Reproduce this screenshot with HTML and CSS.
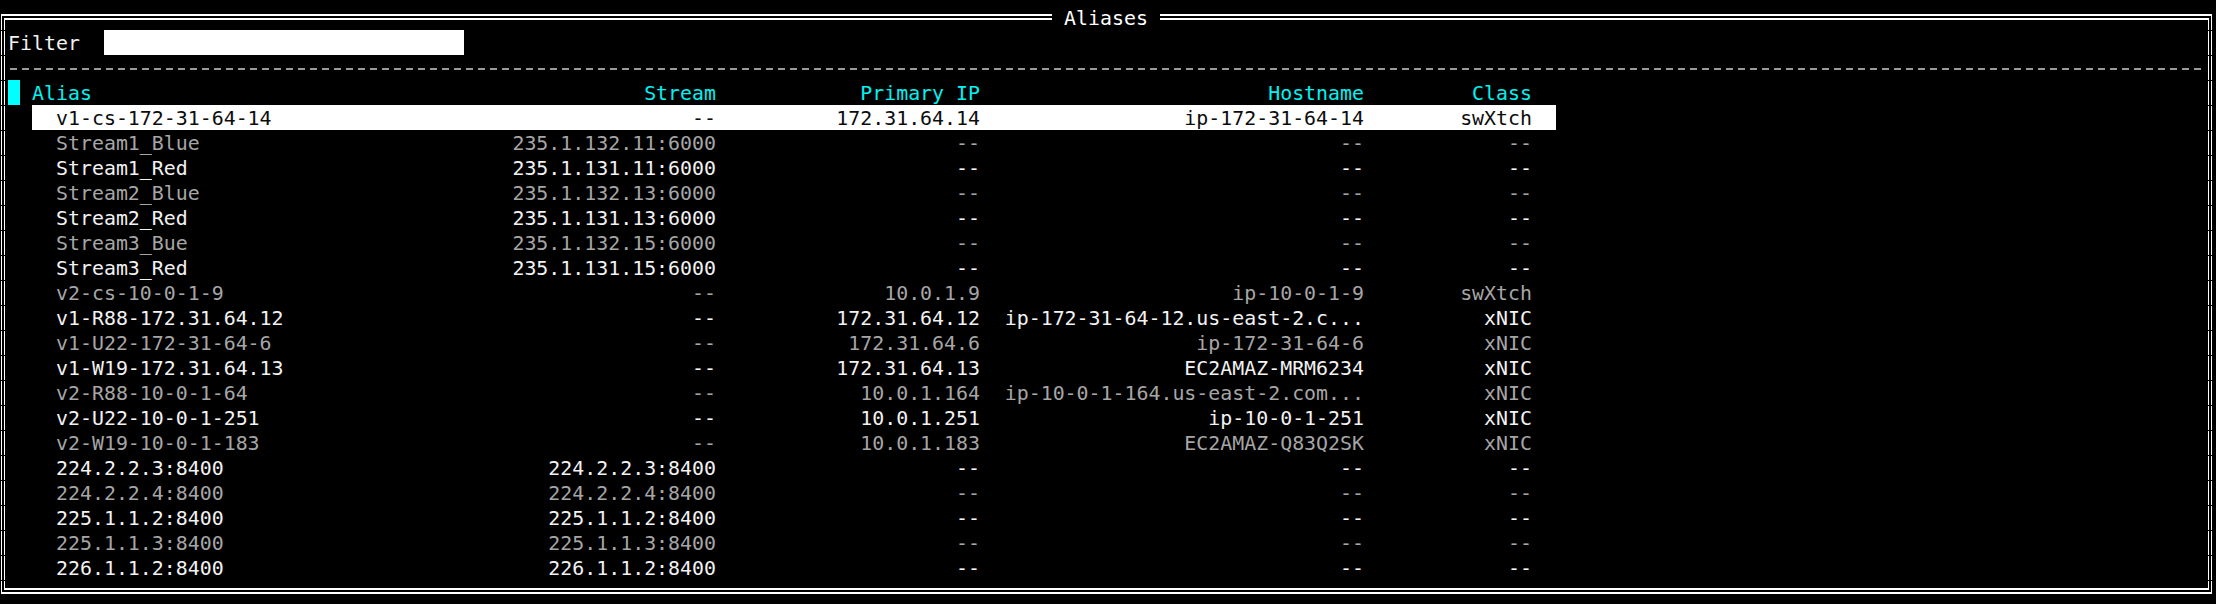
FILE: index.html
```html
<!DOCTYPE html>
<html lang="en">
<head>
<meta charset="utf-8">
<title>Aliases</title>
<link rel="stylesheet" href="styles.css">
</head>
<body>
<div class="frame">
  <div class="frame-inner">
    <div class="title">Aliases</div>

    <div class="filter-row">
      <span class="filter-label">Filter</span>
      <span class="filter-input"></span>
    </div>

    <div class="sep"><div class="dashes"></div></div>

    <div class="row header">
      <div class="mark"><span class="cursor"></span></div>
      <div class="cells">
        <span class="c alias">Alias</span>
        <span class="c r">Stream</span>
        <span class="c r">Primary IP</span>
        <span class="c r">Hostname</span>
        <span class="c r">Class</span>
      </div>
    </div>

    <div class="row sel">
      <div class="mark"></div>
      <div class="cells">
        <span class="c alias">v1-cs-172-31-64-14</span>
        <span class="c r">--</span>
        <span class="c r">172.31.64.14</span>
        <span class="c r">ip-172-31-64-14</span>
        <span class="c r">swXtch</span>
      </div>
    </div>

    <div class="row dim">
      <div class="mark"></div>
      <div class="cells">
        <span class="c alias">Stream1_Blue</span>
        <span class="c r">235.1.132.11:6000</span>
        <span class="c r">--</span>
        <span class="c r">--</span>
        <span class="c r">--</span>
      </div>
    </div>

    <div class="row bright">
      <div class="mark"></div>
      <div class="cells">
        <span class="c alias">Stream1_Red</span>
        <span class="c r">235.1.131.11:6000</span>
        <span class="c r">--</span>
        <span class="c r">--</span>
        <span class="c r">--</span>
      </div>
    </div>

    <div class="row dim">
      <div class="mark"></div>
      <div class="cells">
        <span class="c alias">Stream2_Blue</span>
        <span class="c r">235.1.132.13:6000</span>
        <span class="c r">--</span>
        <span class="c r">--</span>
        <span class="c r">--</span>
      </div>
    </div>

    <div class="row bright">
      <div class="mark"></div>
      <div class="cells">
        <span class="c alias">Stream2_Red</span>
        <span class="c r">235.1.131.13:6000</span>
        <span class="c r">--</span>
        <span class="c r">--</span>
        <span class="c r">--</span>
      </div>
    </div>

    <div class="row dim">
      <div class="mark"></div>
      <div class="cells">
        <span class="c alias">Stream3_Bue</span>
        <span class="c r">235.1.132.15:6000</span>
        <span class="c r">--</span>
        <span class="c r">--</span>
        <span class="c r">--</span>
      </div>
    </div>

    <div class="row bright">
      <div class="mark"></div>
      <div class="cells">
        <span class="c alias">Stream3_Red</span>
        <span class="c r">235.1.131.15:6000</span>
        <span class="c r">--</span>
        <span class="c r">--</span>
        <span class="c r">--</span>
      </div>
    </div>

    <div class="row dim">
      <div class="mark"></div>
      <div class="cells">
        <span class="c alias">v2-cs-10-0-1-9</span>
        <span class="c r">--</span>
        <span class="c r">10.0.1.9</span>
        <span class="c r">ip-10-0-1-9</span>
        <span class="c r">swXtch</span>
      </div>
    </div>

    <div class="row bright">
      <div class="mark"></div>
      <div class="cells">
        <span class="c alias">v1-R88-172.31.64.12</span>
        <span class="c r">--</span>
        <span class="c r">172.31.64.12</span>
        <span class="c r">ip-172-31-64-12.us-east-2.c...</span>
        <span class="c r">xNIC</span>
      </div>
    </div>

    <div class="row dim">
      <div class="mark"></div>
      <div class="cells">
        <span class="c alias">v1-U22-172-31-64-6</span>
        <span class="c r">--</span>
        <span class="c r">172.31.64.6</span>
        <span class="c r">ip-172-31-64-6</span>
        <span class="c r">xNIC</span>
      </div>
    </div>

    <div class="row bright">
      <div class="mark"></div>
      <div class="cells">
        <span class="c alias">v1-W19-172.31.64.13</span>
        <span class="c r">--</span>
        <span class="c r">172.31.64.13</span>
        <span class="c r">EC2AMAZ-MRM6234</span>
        <span class="c r">xNIC</span>
      </div>
    </div>

    <div class="row dim">
      <div class="mark"></div>
      <div class="cells">
        <span class="c alias">v2-R88-10-0-1-64</span>
        <span class="c r">--</span>
        <span class="c r">10.0.1.164</span>
        <span class="c r">ip-10-0-1-164.us-east-2.com...</span>
        <span class="c r">xNIC</span>
      </div>
    </div>

    <div class="row bright">
      <div class="mark"></div>
      <div class="cells">
        <span class="c alias">v2-U22-10-0-1-251</span>
        <span class="c r">--</span>
        <span class="c r">10.0.1.251</span>
        <span class="c r">ip-10-0-1-251</span>
        <span class="c r">xNIC</span>
      </div>
    </div>

    <div class="row dim">
      <div class="mark"></div>
      <div class="cells">
        <span class="c alias">v2-W19-10-0-1-183</span>
        <span class="c r">--</span>
        <span class="c r">10.0.1.183</span>
        <span class="c r">EC2AMAZ-Q83Q2SK</span>
        <span class="c r">xNIC</span>
      </div>
    </div>

    <div class="row bright">
      <div class="mark"></div>
      <div class="cells">
        <span class="c alias">224.2.2.3:8400</span>
        <span class="c r">224.2.2.3:8400</span>
        <span class="c r">--</span>
        <span class="c r">--</span>
        <span class="c r">--</span>
      </div>
    </div>

    <div class="row dim">
      <div class="mark"></div>
      <div class="cells">
        <span class="c alias">224.2.2.4:8400</span>
        <span class="c r">224.2.2.4:8400</span>
        <span class="c r">--</span>
        <span class="c r">--</span>
        <span class="c r">--</span>
      </div>
    </div>

    <div class="row bright">
      <div class="mark"></div>
      <div class="cells">
        <span class="c alias">225.1.1.2:8400</span>
        <span class="c r">225.1.1.2:8400</span>
        <span class="c r">--</span>
        <span class="c r">--</span>
        <span class="c r">--</span>
      </div>
    </div>

    <div class="row dim">
      <div class="mark"></div>
      <div class="cells">
        <span class="c alias">225.1.1.3:8400</span>
        <span class="c r">225.1.1.3:8400</span>
        <span class="c r">--</span>
        <span class="c r">--</span>
        <span class="c r">--</span>
      </div>
    </div>

    <div class="row bright">
      <div class="mark"></div>
      <div class="cells">
        <span class="c alias">226.1.1.2:8400</span>
        <span class="c r">226.1.1.2:8400</span>
        <span class="c r">--</span>
        <span class="c r">--</span>
        <span class="c r">--</span>
      </div>
    </div>
  </div>
</div>
</body>
</html>
```

FILE: styles.css
```css
html, body {
  margin: 0;
  padding: 0;
  background: #000;
}

body {
  width: 2216px;
  height: 604px;
  overflow: hidden;
  font-family: "DejaVu Sans Mono", "Liberation Mono", monospace;
  font-size: 19.9px;
  color: #f2f2f2;
}

/* Outer line of the double frame */
.frame {
  margin: 14px 4px 0 1px;
  border-top: 2px solid #fff;
  border-bottom: 2px solid #fff;
  padding: 2px 3px;
  background:
    linear-gradient(#fff 0 24px, transparent 24px 25px) left 0 top -8px / 1px 25px repeat-y,
    linear-gradient(#fff 0 24px, transparent 24px 25px) right 0 top -8px / 1px 25px repeat-y;
  background-origin: border-box;
}

/* Inner line of the double frame */
.frame-inner {
  position: relative;
  border-top: 2px solid #fff;
  border-bottom: 2px solid #fff;
  padding: 10px 1px 8px 4px;
  background:
    linear-gradient(#fff 0 24px, transparent 24px 25px) left 0 top -12px / 1px 25px repeat-y,
    linear-gradient(#fff 0 24px, transparent 24px 25px) right 0 top -12px / 1px 25px repeat-y;
  background-origin: border-box;
}

.title {
  position: absolute;
  top: -15px;
  left: 1048px;
  width: 108px;
  height: 25px;
  line-height: 27px;
  background: #000;
  color: #fff;
  text-align: center;
  white-space: pre;
}

.filter-row {
  display: flex;
  height: 25px;
  line-height: 27px;
}

.filter-label {
  width: 96px;
  color: #f2f2f2;
}

.filter-input {
  width: 360px;
  background: #fff;
}

.sep {
  box-sizing: border-box;
  height: 25px;
  padding-top: 13px;
}

.dashes {
  width: 2196px;
  height: 2px;
  background: repeating-linear-gradient(to right,
    transparent 0 2px,
    #9a9a9a 2px 9px,
    transparent 9px 12px);
}

.row {
  display: flex;
  height: 25px;
  line-height: 27px;
  white-space: pre;
}

.mark {
  width: 24px;
  flex: none;
}

.cursor {
  display: block;
  width: 12px;
  height: 25px;
  background: #00ffff;
}

.cells {
  display: grid;
  grid-template-columns: 372px 312px 264px 384px 168px;
  padding-right: 24px;
  height: 25px;
}

.c {
  display: block;
  overflow: visible;
}

.r {
  text-align: right;
}

.alias {
  padding-left: 24px;
}

.header .cells {
  color: #00f2f2;
}

.header .alias {
  padding-left: 0;
}

.sel .cells {
  background: #fff;
  color: #0c0c0c;
}

.bright {
  color: #f2f2f2;
}

.dim {
  color: #a6a6a6;
}
```
